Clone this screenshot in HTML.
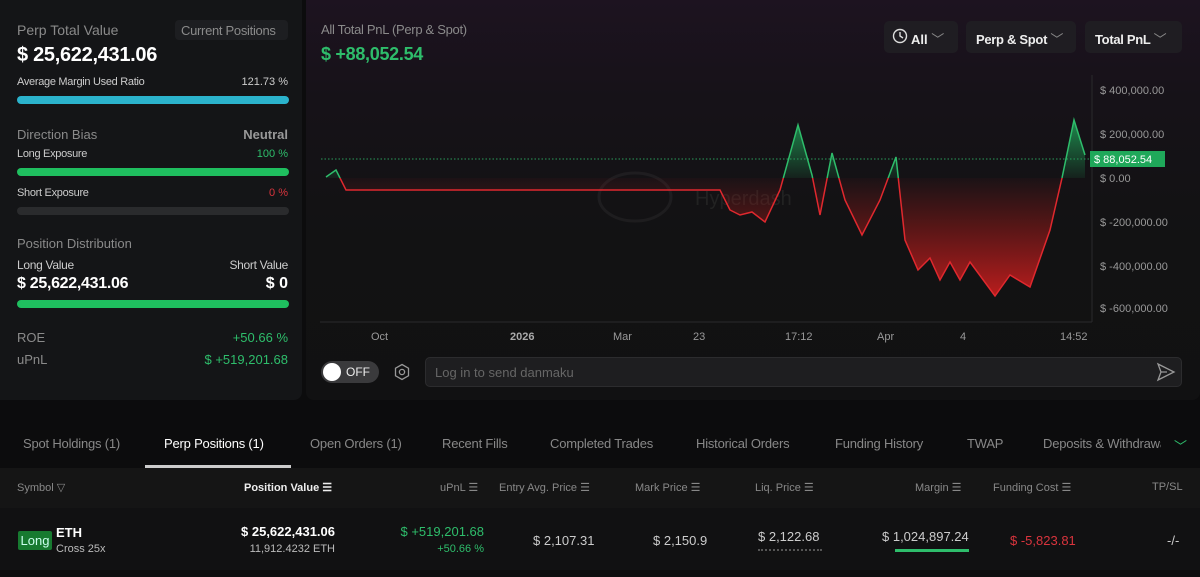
<!DOCTYPE html>
<html><head><meta charset="utf-8"><style>
*{margin:0;padding:0;box-sizing:border-box}
body{width:1200px;height:577px;background:#0c0c0d;font-family:"Liberation Sans",sans-serif;color:#ddd;position:relative;overflow:hidden}
.a{position:absolute;white-space:nowrap}
.g{color:#2ebd6b}.r{color:#d9343d}.m{color:#8a8a8a}
.bar{position:absolute;height:8px;border-radius:4px}
</style></head><body>
<div class="a" style="left:0;top:0;width:302px;height:400px;background:#141517;border-radius:0 0 8px 0"></div>
<div class="a" style="left:306px;top:0;width:894px;height:400px;background:linear-gradient(180deg,#1d1320 0%,#161218 25%,#121213 60%,#111112 100%);border-radius:0 0 8px 8px"></div>

<div class="a m" style="left:17px;top:22px;font-size:14px">Perp Total Value</div>
<div class="a" style="left:175px;top:20px;width:113px;height:20px;background:#1d1e21;border-radius:4px"></div>
<div class="a m" style="left:181px;top:23px;font-size:13px;letter-spacing:-0.3px">Current Positions</div>
<div class="a" style="left:17px;top:44px;font-size:20px;font-weight:bold;color:#fff;letter-spacing:-0.3px">$ 25,622,431.06</div>
<div class="a" style="left:17px;top:76px;font-size:11px;color:#ccc;letter-spacing:-0.3px">Average Margin Used Ratio</div>
<div class="a" style="right:912px;top:76px;font-size:11px;color:#ccc">121.73 %</div>
<div class="bar" style="left:17px;top:96px;width:272px;background:#2bb3cc"></div>
<div class="a m" style="left:17px;top:127px;font-size:13px">Direction Bias</div>
<div class="a" style="right:912px;top:127px;font-size:13px;font-weight:bold;color:#999">Neutral</div>
<div class="a" style="left:17px;top:148px;font-size:11px;color:#ccc;letter-spacing:-0.3px">Long Exposure</div>
<div class="a g" style="right:912px;top:148px;font-size:11px">100 %</div>
<div class="bar" style="left:17px;top:168px;width:272px;background:#1fbf5f"></div>
<div class="a" style="left:17px;top:187px;font-size:11px;color:#ccc;letter-spacing:-0.3px">Short Exposure</div>
<div class="a r" style="right:912px;top:187px;font-size:11px">0 %</div>
<div class="bar" style="left:17px;top:207px;width:272px;background:#2a2b2d"></div>
<div class="a m" style="left:17px;top:236px;font-size:13px">Position Distribution</div>
<div class="a" style="left:17px;top:258px;font-size:12px;color:#ccc;letter-spacing:-0.3px">Long Value</div>
<div class="a" style="right:912px;top:258px;font-size:12px;color:#ccc;letter-spacing:-0.3px">Short Value</div>
<div class="a" style="left:17px;top:275px;font-size:16px;font-weight:bold;color:#fff;letter-spacing:-0.3px">$ 25,622,431.06</div>
<div class="a" style="right:912px;top:275px;font-size:16px;font-weight:bold;color:#fff">$ 0</div>
<div class="bar" style="left:17px;top:300px;width:272px;background:#1fbf5f"></div>
<div class="a m" style="left:17px;top:330px;font-size:13px">ROE</div>
<div class="a g" style="right:912px;top:330px;font-size:13px">+50.66 %</div>
<div class="a m" style="left:17px;top:352px;font-size:13px">uPnL</div>
<div class="a g" style="right:912px;top:352px;font-size:13px">$ +519,201.68</div>

<div class="a m" style="left:321px;top:22px;font-size:13px;letter-spacing:-0.3px">All Total PnL (Perp &amp; Spot)</div>
<div class="a g" style="left:321px;top:44px;font-size:18px;font-weight:bold;letter-spacing:-0.3px">$ +88,052.54</div>
<div class="a" style="left:884px;top:21px;width:74px;height:32px;background:#1f1d22;border-radius:5px"></div>
<div class="a" style="left:966px;top:21px;width:110px;height:32px;background:#1f1d22;border-radius:5px"></div>
<div class="a" style="left:1085px;top:21px;width:97px;height:32px;background:#1f1d22;border-radius:5px"></div>
<svg class="a" style="left:892px;top:28px" width="16" height="16"><circle cx="8" cy="8" r="6.5" fill="none" stroke="#ddd" stroke-width="1.4"/><path d="M8 4v4l3 2" stroke="#ddd" fill="none" stroke-width="1.4"/></svg>
<div class="a" style="left:911px;top:29px;font-size:13px;font-weight:bold;color:#eee">All <span style="font-weight:normal;color:#888">﹀</span></div>
<div class="a" style="left:976px;top:29px;font-size:13px;font-weight:bold;color:#eee;letter-spacing:-0.3px">Perp &amp; Spot <span style="font-weight:normal;color:#888">﹀</span></div>
<div class="a" style="left:1095px;top:29px;font-size:13px;font-weight:bold;color:#eee;letter-spacing:-0.3px">Total PnL <span style="font-weight:normal;color:#888">﹀</span></div>

<svg class="a" style="left:0;top:0" width="1200" height="400">
<defs>
<linearGradient id="gg" x1="0" y1="120" x2="0" y2="178" gradientUnits="userSpaceOnUse"><stop offset="0" stop-color="#1fa85a" stop-opacity=".8"/><stop offset="1" stop-color="#1fa85a" stop-opacity=".1"/></linearGradient>
<linearGradient id="rg" x1="0" y1="178" x2="0" y2="300" gradientUnits="userSpaceOnUse"><stop offset="0" stop-color="#b01a1a" stop-opacity=".05"/><stop offset="1" stop-color="#c81e1e" stop-opacity=".95"/></linearGradient>
<clipPath id="up"><rect x="300" y="0" width="800" height="178"/></clipPath>
<clipPath id="dn"><rect x="300" y="178" width="800" height="200"/></clipPath>
</defs>
<line x1="1092" y1="75" x2="1092" y2="322" stroke="#2a2a2c"/>
<line x1="320" y1="322" x2="1092" y2="322" stroke="#2a2a2c"/>
<line x1="321" y1="159" x2="1092" y2="159" stroke="#2ebd6b" stroke-dasharray="1.5 2" stroke-opacity=".8"/>
<g opacity=".08" fill="none" stroke="#aaa" stroke-width="3"><ellipse cx="635" cy="197" rx="36" ry="24"/></g>
<text x="695" y="205" font-size="20" fill="#222" font-family="Liberation Sans">Hyperdash</text>
<polygon points="326,178 326,177 336,170 346,190 720,190 730,210 740,215 752,212 765,222 780,190 798,125 812,175 820,215 832,153 845,200 862,235 880,200 896,157 905,240 918,270 930,258 940,280 950,262 960,280 970,262 995,296 1010,275 1030,287 1050,230 1062,178 1074,120 1085,155 1085,178" fill="url(#gg)" clip-path="url(#up)"/>
<polygon points="326,178 326,177 336,170 346,190 720,190 730,210 740,215 752,212 765,222 780,190 798,125 812,175 820,215 832,153 845,200 862,235 880,200 896,157 905,240 918,270 930,258 940,280 950,262 960,280 970,262 995,296 1010,275 1030,287 1050,230 1062,178 1074,120 1085,155 1085,178" fill="url(#rg)" clip-path="url(#dn)"/>
<polyline points="326,177 336,170 346,190 720,190 730,210 740,215 752,212 765,222 780,190 798,125 812,175 820,215 832,153 845,200 862,235 880,200 896,157 905,240 918,270 930,258 940,280 950,262 960,280 970,262 995,296 1010,275 1030,287 1050,230 1062,178 1074,120 1085,155" fill="none" stroke="#2ebd6b" stroke-width="1.5" clip-path="url(#up)"/>
<polyline points="326,177 336,170 346,190 720,190 730,210 740,215 752,212 765,222 780,190 798,125 812,175 820,215 832,153 845,200 862,235 880,200 896,157 905,240 918,270 930,258 940,280 950,262 960,280 970,262 995,296 1010,275 1030,287 1050,230 1062,178 1074,120 1085,155" fill="none" stroke="#e0282e" stroke-width="1.5" clip-path="url(#dn)"/>
<g font-size="11" fill="#999" font-family="Liberation Sans">
<text x="1100" y="94">$ 400,000.00</text><text x="1100" y="138">$ 200,000.00</text><text x="1100" y="182">$ 0.00</text><text x="1100" y="226">$ -200,000.00</text><text x="1100" y="270">$ -400,000.00</text><text x="1100" y="312">$ -600,000.00</text>
<text x="371" y="340">Oct</text><text x="510" y="340" font-weight="bold" fill="#aaa">2026</text><text x="613" y="340">Mar</text><text x="693" y="340">23</text><text x="785" y="340">17:12</text><text x="877" y="340">Apr</text><text x="960" y="340">4</text><text x="1060" y="340">14:52</text>
</g>
<rect x="1090" y="151" width="75" height="16" fill="#1fa85a"/>
<text x="1094" y="163" font-size="11" fill="#fff" font-family="Liberation Sans">$ 88,052.54</text>
</svg>

<div class="a" style="left:321px;top:361px;width:58px;height:22px;background:#3a3a3c;border-radius:11px"></div>
<div class="a" style="left:323px;top:363px;width:18px;height:18px;background:#fff;border-radius:50%"></div>
<div class="a" style="left:346px;top:365px;font-size:12px;color:#eee">OFF</div>
<svg class="a" style="left:393px;top:363px" width="18" height="18"><path d="M9 1.5l6.5 3.7v7.6L9 16.5l-6.5-3.7V5.2z" fill="none" stroke="#999" stroke-width="1.3"/><circle cx="9" cy="9" r="2.6" fill="none" stroke="#999" stroke-width="1.3"/></svg>
<div class="a" style="left:425px;top:357px;width:757px;height:30px;background:#1e1e20;border:1px solid #2c2c2e;border-radius:5px"></div>
<div class="a" style="left:435px;top:365px;font-size:13px;color:#666">Log in to send danmaku</div>
<svg class="a" style="left:1156px;top:362px" width="20" height="20"><path d="M2 2l16 8-16 8 3-8z M5 10h6" fill="none" stroke="#999" stroke-width="1.3"/></svg>

<div class="a" style="left:0;top:436px;width:1200px;font-size:13px;color:#888;letter-spacing:-0.2px">
<span class="a" style="left:23px">Spot Holdings (1)</span>
<span class="a" style="left:164px;color:#fff">Perp Positions (1)</span>
<span class="a" style="left:310px">Open Orders (1)</span>
<span class="a" style="left:442px">Recent Fills</span>
<span class="a" style="left:550px">Completed Trades</span>
<span class="a" style="left:696px">Historical Orders</span>
<span class="a" style="left:835px">Funding History</span>
<span class="a" style="left:967px">TWAP</span>
<span class="a" style="left:1043px;width:118px;overflow:hidden">Deposits &amp; Withdrawals</span>
<span class="a g" style="left:1174px">﹀</span>
</div>
<div class="a" style="left:145px;top:465px;width:146px;height:3px;background:#ccc"></div>
<div class="a" style="left:0;top:468px;width:1200px;height:40px;background:#151515"></div>
<div class="a" style="left:0;top:508px;width:1200px;height:62px;background:#111112"></div>
<div style="font-size:11px;color:#888">
<div class="a" style="left:17px;top:481px">Symbol ▽</div>
<div class="a" style="left:244px;top:481px;color:#eee;font-weight:bold">Position Value ☰</div>
<div class="a" style="left:440px;top:481px">uPnL ☰</div>
<div class="a" style="left:499px;top:481px">Entry Avg. Price ☰</div>
<div class="a" style="left:635px;top:481px">Mark Price ☰</div>
<div class="a" style="left:755px;top:481px">Liq. Price ☰</div>
<div class="a" style="left:915px;top:481px">Margin ☰</div>
<div class="a" style="left:993px;top:481px">Funding Cost ☰</div>
<div class="a" style="left:1152px;top:481px">TP/SL</div>
</div>
<div class="a" style="left:18px;top:531px;width:34px;height:19px;background:#177a30;border-radius:2px;color:#cfe;font-size:13px;text-align:center;line-height:19px">Long</div>
<div class="a" style="left:56px;top:525px;font-size:13px;font-weight:bold;color:#fff">ETH</div>
<div class="a" style="left:56px;top:543px;font-size:11px;color:#bbb">Cross 25x</div>
<div class="a" style="right:865px;top:524px;font-size:13px;font-weight:bold;color:#fff">$ 25,622,431.06</div>
<div class="a" style="right:865px;top:543px;font-size:11px;color:#bbb">11,912.4232 ETH</div>
<div class="a g" style="right:716px;top:524px;font-size:13px">$ +519,201.68</div>
<div class="a g" style="right:716px;top:543px;font-size:11px">+50.66 %</div>
<div class="a" style="left:533px;top:533px;font-size:13px;color:#ccc">$ 2,107.31</div>
<div class="a" style="left:653px;top:533px;font-size:13px;color:#ccc">$ 2,150.9</div>
<div class="a" style="left:758px;top:529px;font-size:13px;color:#ccc">$ 2,122.68</div>
<div class="a" style="left:758px;top:549px;width:64px;border-top:2px dotted #555"></div>
<div class="a" style="left:882px;top:529px;font-size:13px;color:#ccc">$ 1,024,897.24</div>
<div class="a" style="left:895px;top:549px;width:74px;height:3px;background:#2ebd6b"></div>
<div class="a r" style="left:1010px;top:533px;font-size:13px">$ -5,823.81</div>
<div class="a" style="left:1167px;top:533px;font-size:13px;color:#ccc">-/-</div>
</body></html>
